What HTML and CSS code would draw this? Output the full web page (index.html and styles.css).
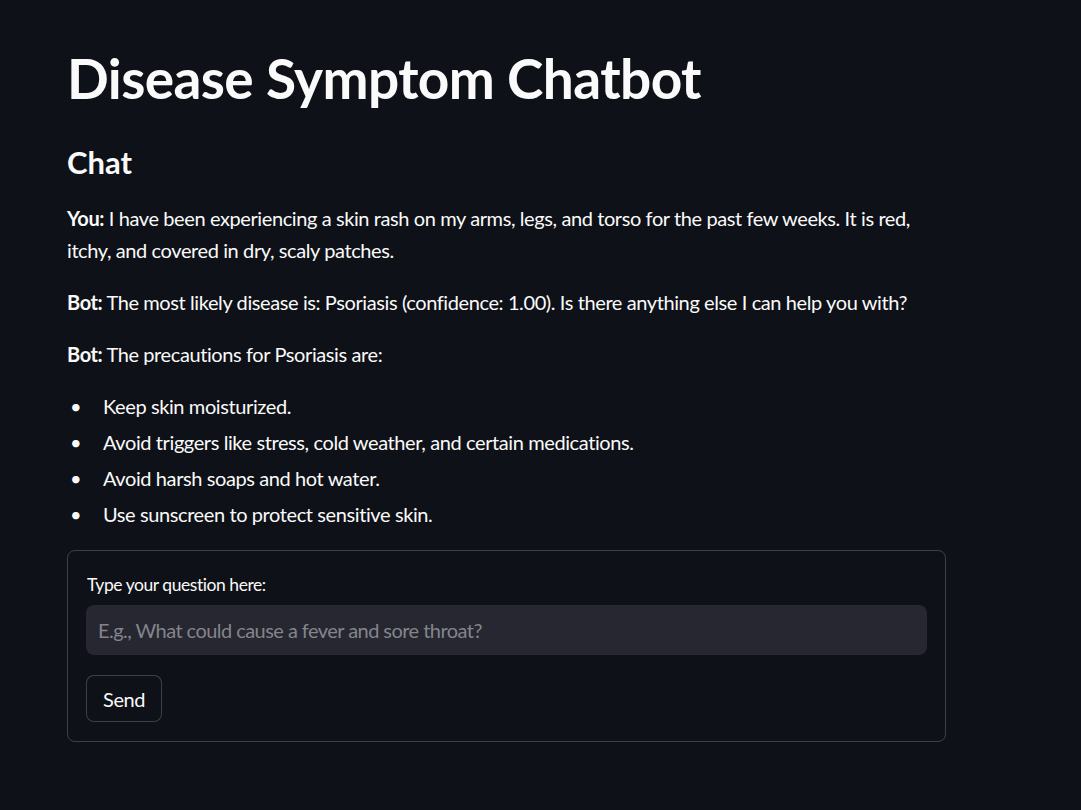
FILE: index.html
```html
<!DOCTYPE html>
<html lang="en">
<head>
<meta charset="utf-8">
<title>Disease Symptom Chatbot</title>
<link rel="stylesheet" href="styles.css">
</head>
<body>
<main class="main">
  <h1 class="title">Disease Symptom Chatbot</h1>
  <h2 class="subtitle">Chat</h2>
  <p class="msg"><strong>You:</strong> I have been experiencing a skin rash on my arms, legs, and torso for the past few weeks. It is red, itchy, and covered in dry, scaly patches.</p>
  <p class="msg"><strong>Bot:</strong> The most likely disease is: Psoriasis (confidence: 1.00). Is there anything else I can help you with?</p>
  <p class="msg"><strong>Bot:</strong> The precautions for Psoriasis are:</p>
  <ul class="list">
    <li class="item">Keep skin moisturized.</li>
    <li class="item">Avoid triggers like stress, cold weather, and certain medications.</li>
    <li class="item">Avoid harsh soaps and hot water.</li>
    <li class="item">Use sunscreen to protect sensitive skin.</li>
  </ul>
  <form class="form">
    <label class="label" for="q">Type your question here:</label>
    <input class="input" id="q" type="text" placeholder="E.g., What could cause a fever and sore throat?">
    <div class="actions"><button class="btn" type="button">Send</button></div>
  </form>
</main>
</body>
</html>
```
FILE: styles.css
```css
html, body {
  margin: 0;
  padding: 0;
  background: #0e1117;
  color: #fafafa;
  font-family: Lato, "Noto Sans", sans-serif;
}
.main {
  width: 879px;
  padding: 45px 0 40px 67px;
}
.title {
  margin: 0;
  font-size: 55px;
  line-height: 66px;
  font-weight: 700;
  letter-spacing: -0.6px;
}
.subtitle {
  margin: 31px 0 20px;
  font-size: 31px;
  line-height: 40px;
  font-weight: 700;
}
.msg {
  margin: 0 0 20px;
  font-size: 20px;
  line-height: 32px;
  letter-spacing: -0.4px;
}
.msg strong {
  font-weight: 700;
}
.list {
  list-style: none;
  margin: 0 0 20px;
  padding: 0;
}
.item {
  display: flex;
  font-size: 20px;
  line-height: 32px;
  margin-bottom: 4px;
  letter-spacing: -0.4px;
}
.item::before {
  content: "\2022";
  width: 36px;
  flex: none;
  padding-left: 3px;
  box-sizing: border-box;
}
.form {
  border: 1px solid rgba(250, 250, 250, 0.2);
  border-radius: 8px;
  padding: 20px 18px 19px;
  display: flex;
  flex-direction: column;
}
.label {
  font-size: 17.5px;
  line-height: 28px;
  margin-left: 1px;
  margin-bottom: 6px;
  letter-spacing: -0.45px;
}
.input {
  height: 50px;
  box-sizing: border-box;
  border: none;
  border-radius: 8px;
  background: #262730;
  color: #fafafa;
  padding: 0 12px;
  font-family: inherit;
  font-size: 20px;
  letter-spacing: -0.55px;
  outline: none;
}
.input::placeholder {
  color: #83858c;
}
.actions {
  margin-top: 20px;
  display: flex;
}
.btn {
  height: 47px;
  padding: 0 16px;
  background: #0e1117;
  color: #fafafa;
  border: 1px solid rgba(250, 250, 250, 0.2);
  border-radius: 8px;
  font-family: inherit;
  font-size: 20px;
  letter-spacing: -0.4px;
}
```
